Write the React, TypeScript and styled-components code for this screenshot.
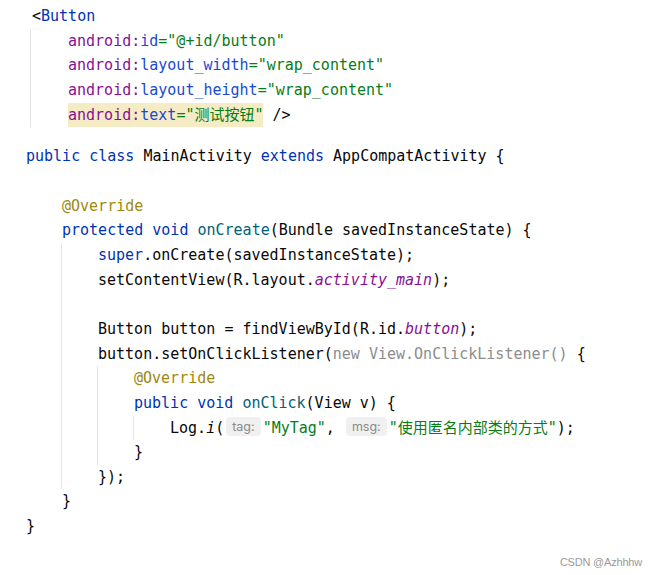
import React from "react";
import styled, { createGlobalStyle, css } from "styled-components";

const GlobalStyle = createGlobalStyle`
  html, body {
    margin: 0;
    padding: 0;
    background: #ffffff;
  }
`;

const Page = styled.div`
  width: 656px;
  height: 575px;
  background: #ffffff;
  display: flex;
  flex-direction: column;
  overflow: hidden;
  font-family: "DejaVu Sans Mono", "Noto Sans CJK SC", monospace;
  font-size: 15px;
  color: #080808;
`;

const CodeBlock = styled.div<{ $left: number; $top: number }>`
  display: flex;
  flex-direction: column;
  padding-left: ${(p) => p.$left}px;
  margin-top: ${(p) => p.$top}px;
`;

const Line = styled.div<{ $indent?: number }>`
  height: 24.67px;
  line-height: 24.67px;
  white-space: pre;
  padding-left: ${(p) => p.$indent ?? 0}px;
`;

const Guide = styled.div<{ $offset: number; $pad: number }>`
  display: flex;
  flex-direction: column;
  margin-left: ${(p) => p.$offset}px;
  padding-left: ${(p) => p.$pad}px;
  border-left: 1px solid #e4e4e4;
`;

type Kind = "kw" | "tag" | "ns" | "attr" | "str" | "ann" | "fn" | "field" | "gray" | "italic";

const colors: Record<Kind, string> = {
  kw: "#0033b3",
  tag: "#0033b3",
  ns: "#871094",
  attr: "#174ad4",
  str: "#067d17",
  ann: "#9e880d",
  fn: "#00627a",
  field: "#871094",
  gray: "#8c8c8c",
  italic: "#080808",
};

const Tok = styled.span<{ $k: Kind }>`
  color: ${(p) => colors[p.$k]};
  ${(p) =>
    (p.$k === "field" || p.$k === "italic") &&
    css`
      font-style: italic;
    `}
`;

const Highlight = styled.span`
  background: #f5ebc4;
  height: 24px;
  line-height: 24px;
  display: inline-block;
  vertical-align: top;
`;

const Hint = styled.span`
  display: inline-block;
  vertical-align: middle;
  font-family: "Inter", "Noto Sans", sans-serif;
  font-size: 12.5px;
  color: #8a8a8a;
  background: #f0f0f0;
  border-radius: 4px;
  height: 19px;
  line-height: 19px;
  padding: 0 6px;
  margin: -3px 2px 0;
`;

const Footer = styled.div`
  display: flex;
  justify-content: flex-end;
  padding-right: 14px;
  margin-top: 17px;
  font-family: "Liberation Sans", Arial, sans-serif;
  font-size: 11px;
  color: #9a9a9a;
  letter-spacing: -0.2px;
`;

const K = (k: Kind, t: string) => <Tok $k={k}>{t}</Tok>;

export default function App() {
  return (
    <>
      <GlobalStyle />
      <Page>
        <CodeBlock $left={30} $top={4}>
          <Line $indent={2}>
            {"<"}
            {K("tag", "Button")}
          </Line>
          <Guide $offset={0} $pad={37}>
            <Line>
              {K("ns", "android:")}
              {K("attr", "id")}
              {K("str", '="@+id/button"')}
            </Line>
            <Line>
              {K("ns", "android:")}
              {K("attr", "layout_width")}
              {K("str", '="wrap_content"')}
            </Line>
            <Line>
              {K("ns", "android:")}
              {K("attr", "layout_height")}
              {K("str", '="wrap_content"')}
            </Line>
            <Line>
              <Highlight>
                {K("ns", "android:")}
                {K("attr", "text")}
                {K("str", '="测试按钮"')}
              </Highlight>
              {" />"}
            </Line>
          </Guide>
        </CodeBlock>

        <CodeBlock $left={26} $top={17}>
          <Line>
            {K("kw", "public")}
            {" "}
            {K("kw", "class")}
            {" MainActivity "}
            {K("kw", "extends")}
            {" AppCompatActivity {"}
          </Line>
          <Line />
          <Line $indent={36}>{K("ann", "@Override")}</Line>
          <Line $indent={36}>
            {K("kw", "protected")}
            {" "}
            {K("kw", "void")}
            {" "}
            {K("fn", "onCreate")}
            {"(Bundle savedInstanceState) {"}
          </Line>
          <Guide $offset={35} $pad={36}>
            <Line>
              {K("kw", "super")}
              {".onCreate(savedInstanceState);"}
            </Line>
            <Line>
              {"setContentView(R.layout."}
              {K("field", "activity_main")}
              {");"}
            </Line>
            <Line />
            <Line>
              {"Button button = findViewById(R.id."}
              {K("field", "button")}
              {");"}
            </Line>
            <Line>
              {"button.setOnClickListener("}
              {K("gray", "new View.OnClickListener()")}
              {" {"}
            </Line>
            <Guide $offset={-1} $pad={36}>
              <Line>{K("ann", "@Override")}</Line>
              <Line>
                {K("kw", "public")}
                {" "}
                {K("kw", "void")}
                {" "}
                {K("fn", "onClick")}
                {"(View v) {"}
              </Line>
              <Guide $offset={-1} $pad={36}>
                <Line>
                  {"Log."}
                  {K("italic", "i")}
                  {"("}
                  <Hint>tag:</Hint>
                  {K("str", '"MyTag"')}
                  {", "}
                  <Hint>msg:</Hint>
                  {K("str", '"使用匿名内部类的方式"')}
                  {");"}
                </Line>
              </Guide>
              <Line>{"}"}</Line>
            </Guide>
            <Line>{"});"}</Line>
          </Guide>
          <Line $indent={36}>{"}"}</Line>
          <Line>{"}"}</Line>
        </CodeBlock>

        <Footer>CSDN @Azhhhw</Footer>
      </Page>
    </>
  );
}
